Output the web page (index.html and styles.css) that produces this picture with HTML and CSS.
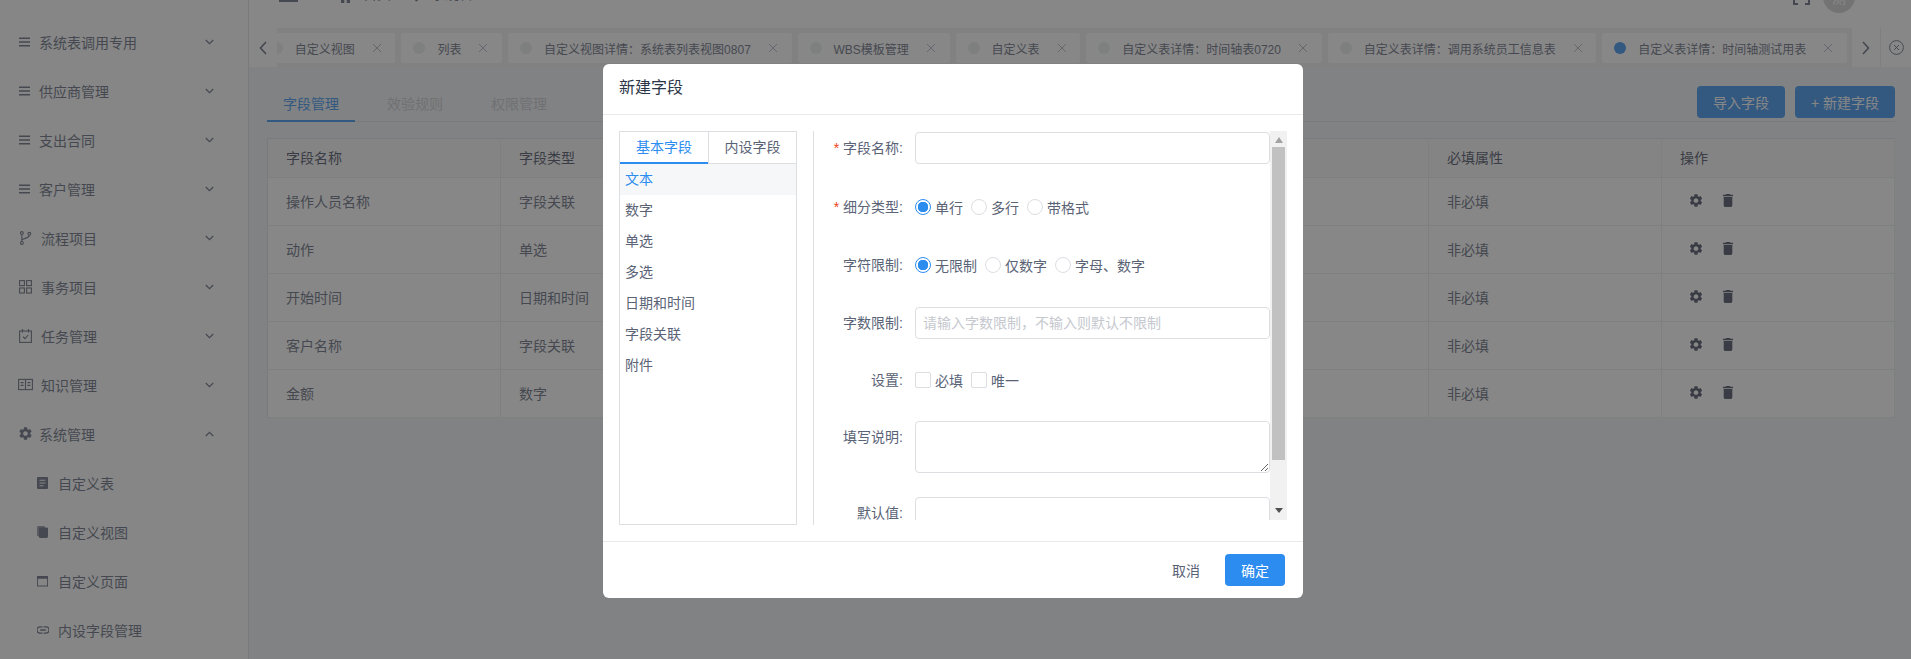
FILE: index.html
```html
<!DOCTYPE html>
<html lang="zh-CN">
<head>
    <meta charset="UTF-8">
    <title>新建字段</title>
    <link rel="stylesheet" href="styles.css">
</head>
<body>
    <svg class="defs" xmlns="http://www.w3.org/2000/svg">
        <symbol id="i-menu" viewBox="0 0 11 10"><path d="M0 1.2h11M0 5h11M0 8.8h11" fill="none" stroke="currentColor" stroke-width="1.4"/></symbol>
        <symbol id="i-branch" viewBox="0 0 13 15"><g fill="none" stroke="currentColor" stroke-width="1.2"><circle cx="2.6" cy="2.2" r="1.5"/><circle cx="2.6" cy="12.8" r="1.5"/><circle cx="10.6" cy="3" r="1.5"/><path d="M2.6 3.7v7.6M10.6 4.5c0 3.2-5 2.6-8 5"/></g></symbol>
        <symbol id="i-grid" viewBox="0 0 13 14"><g fill="none" stroke="currentColor" stroke-width="1.1"><rect x=".6" y=".6" width="4.8" height="5"/><rect x="7.6" y=".6" width="4.8" height="5"/><rect x=".6" y="8" width="4.8" height="5"/><rect x="7.6" y="8" width="4.8" height="5"/></g></symbol>
        <symbol id="i-task" viewBox="0 0 13 14"><g fill="none" stroke="currentColor" stroke-width="1.1"><rect x=".6" y="2" width="11.8" height="11.4"/><path d="M3.5 0v3.4M9.500 0v3.4M4 7.600l2 2 3.200-3.600"/></g></symbol>
        <symbol id="i-book" viewBox="0 0 15 13"><g fill="none" stroke="currentColor" stroke-width="1.1"><rect x=".6" y="1.400" width="13.800" height="10.200"/><path d="M7.500 1.400v10.200M2.600 4.600h3M2.600 7.400h3M9.400 4.600h3M9.400 7.400h3"/></g></symbol>
        <symbol id="i-gear" viewBox="2 2 20 20"><path fill="currentColor" d="M19.140 12.940c.04-.3.06-.61.06-.94 0-.32-.02-.64-.07-.94l2.030-1.580c.18-.14.23-.41.12-.61l-1.920-3.320c-.12-.22-.37-.29-.59-.22l-2.390.96c-.5-.38-1.030-.7-1.620-.94l-.36-2.540c-.04-.24-.24-.41-.48-.41h-3.840c-.24 0-.43.17-.47.41l-.36 2.540c-.59.24-1.130.57-1.620.94l-2.390-.96c-.22-.08-.47 0-.59.22L2.740 8.870c-.12.21-.08.47.12.61l2.030 1.580c-.05.3-.09.63-.09.94s.02.64.07.94l-2.030 1.580c-.18.14-.23.41-.12.61l1.920 3.320c.12.22.37.29.59.22l2.390-.96c.5.38 1.030.7 1.620.94l.36 2.540c.05.24.24.41.48.41h3.840c.24 0 .44-.17.47-.41l.36-2.540c.59-.24 1.130-.56 1.620-.94l2.390.96c.22.08.47 0 .59-.22l1.920-3.320c.12-.22.07-.47-.12-.61l-2.010-1.580zM12 15.600c-1.980 0-3.600-1.620-3.600-3.600s1.620-3.600 3.600-3.600 3.600 1.620 3.600 3.600-1.620 3.600-3.600 3.600z"/></symbol>
        <symbol id="i-trash" viewBox="5 3 14 18"><path fill="currentColor" d="M6 19c0 1.100.9 2 2 2h8c1.100 0 2-.9 2-2V7H6v12zM19 4h-3.500l-1-1h-5l-1 1H5v2h14V4z"/></symbol>
        <symbol id="i-doc" viewBox="0 0 11 12"><path fill="currentColor" fill-rule="evenodd" d="M1 0h9a1 1 0 0 1 1 1v10a1 1 0 0 1-1 1H1a1 1 0 0 1-1-1V1a1 1 0 0 1 1-1zm1.500 2.800v1h6v-1zm0 2.700v1h6v-1zm0 2.700v1h4v-1z"/></symbol>
        <symbol id="i-copy" viewBox="0 0 12 13"><path fill="currentColor" opacity=".7" d="M1.500 0h7v2h-6a.5.5 0 0 0-.5.5V11H1a1 1 0 0 1-1-1V1.500A1.500 1.500 0 0 1 1.500 0z"/><rect x="2" y="1.500" width="10" height="11.500" rx="1.500" fill="currentColor"/></symbol>
        <symbol id="i-window" viewBox="0 0 12 12"><path fill="currentColor" fill-rule="evenodd" d="M0 .5h12v11.500H0zm1 3v7.500h10V3.500z"/></symbol>
        <symbol id="i-link" viewBox="0 0 12 8"><g fill="none" stroke="currentColor" stroke-width="1.300"><path d="M5.500 .9H3a3.100 3.100 0 0 0 0 6.200h2.500M6.500 .9H9a3.100 3.100 0 0 1 0 6.200H6.500M3.200 4h5.600"/></g></symbol>
        <symbol id="i-down" viewBox="0 0 9 6"><path d="M.8 1l3.700 3.700L8.200 1" fill="none" stroke="currentColor" stroke-width="1.200"/></symbol>
        <symbol id="i-up" viewBox="0 0 9 6"><path d="M.8 5l3.700-3.700L8.200 5" fill="none" stroke="currentColor" stroke-width="1.200"/></symbol>
        <symbol id="i-x" viewBox="0 0 10 10"><path d="M1 1l8 8M9 1l-8 8" fill="none" stroke="currentColor" stroke-width=".9"/></symbol>
    </svg>

    <div class="layout">
        <aside class="sidebar">
            <div class="menu-item"><svg class="menu-icon menu-icon-bars"><use href="#i-menu"/></svg><span class="menu-text">系统表调用专用</span><svg class="chev"><use href="#i-down"/></svg></div>
            <div class="menu-item"><svg class="menu-icon menu-icon-bars"><use href="#i-menu"/></svg><span class="menu-text">供应商管理</span><svg class="chev"><use href="#i-down"/></svg></div>
            <div class="menu-item"><svg class="menu-icon menu-icon-bars"><use href="#i-menu"/></svg><span class="menu-text">支出合同</span><svg class="chev"><use href="#i-down"/></svg></div>
            <div class="menu-item"><svg class="menu-icon menu-icon-bars"><use href="#i-menu"/></svg><span class="menu-text">客户管理</span><svg class="chev"><use href="#i-down"/></svg></div>
            <div class="menu-item"><svg class="menu-icon"><use href="#i-branch"/></svg><span class="menu-text">流程项目</span><svg class="chev"><use href="#i-down"/></svg></div>
            <div class="menu-item"><svg class="menu-icon"><use href="#i-grid"/></svg><span class="menu-text">事务项目</span><svg class="chev"><use href="#i-down"/></svg></div>
            <div class="menu-item"><svg class="menu-icon"><use href="#i-task"/></svg><span class="menu-text">任务管理</span><svg class="chev"><use href="#i-down"/></svg></div>
            <div class="menu-item"><svg class="menu-icon menu-icon-book"><use href="#i-book"/></svg><span class="menu-text">知识管理</span><svg class="chev"><use href="#i-down"/></svg></div>
            <div class="menu-item"><svg class="menu-icon menu-icon-gear"><use href="#i-gear"/></svg><span class="menu-text">系统管理</span><svg class="chev"><use href="#i-up"/></svg></div>
            <div class="menu-item sub-item"><svg class="sub-icon"><use href="#i-doc"/></svg><span class="menu-text">自定义表</span></div>
            <div class="menu-item sub-item"><svg class="sub-icon"><use href="#i-copy"/></svg><span class="menu-text">自定义视图</span></div>
            <div class="menu-item sub-item"><svg class="sub-icon"><use href="#i-window"/></svg><span class="menu-text">自定义页面</span></div>
            <div class="menu-item sub-item"><svg class="sub-icon sub-icon-link"><use href="#i-link"/></svg><span class="menu-text">内设字段管理</span></div>
        </aside>

        <main class="main">
            <header class="topbar">
                <div class="topbar-inner">
                    <svg class="top-bars" viewBox="0 0 19 10"><path d="M0 1h19M0 5h19M0 9h19" stroke="currentColor" stroke-width="2"/></svg>
                    <svg class="crumb-home" viewBox="0 0 9 12"><path d="M4.500 0L9 4v8H5.700V8H3.300v4H0V4z" fill="currentColor"/></svg>
                    <span class="crumb">首页</span>
                    <span class="crumb crumb-sep">/</span>
                    <svg class="crumb-gear"><use href="#i-gear"/></svg>
                    <span class="crumb">系统管理</span>
                    <svg class="top-full" viewBox="0 0 17 16"><path d="M1 5V1h4M12 1h4v4M16 11v4h-4M5 15H1v-4" fill="none" stroke="currentColor" stroke-width="2"/></svg>
                    <span class="avatar">测</span>
                </div>
            </header>

            <nav class="tagbar">
                <button class="tag-btn"><svg viewBox="0 0 8 14"><path d="M7 1L1.500 7 7 13" fill="none" stroke="currentColor" stroke-width="1.500"/></svg></button>
                <div class="tag-scroll">
                    <div class="tag tag-first"><i class="dot"></i><span>自定义视图</span><svg class="tag-x"><use href="#i-x"/></svg></div>
                    <div class="tag"><i class="dot"></i><span>列表</span><svg class="tag-x"><use href="#i-x"/></svg></div>
                    <div class="tag"><i class="dot"></i><span>自定义视图详情：系统表列表视图0807</span><svg class="tag-x"><use href="#i-x"/></svg></div>
                    <div class="tag"><i class="dot"></i><span>WBS模板管理</span><svg class="tag-x"><use href="#i-x"/></svg></div>
                    <div class="tag"><i class="dot"></i><span>自定义表</span><svg class="tag-x"><use href="#i-x"/></svg></div>
                    <div class="tag"><i class="dot"></i><span>自定义表详情：时间轴表0720</span><svg class="tag-x"><use href="#i-x"/></svg></div>
                    <div class="tag"><i class="dot"></i><span>自定义表详情：调用系统员工信息表</span><svg class="tag-x"><use href="#i-x"/></svg></div>
                    <div class="tag"><i class="dot dot-on"></i><span>自定义表详情：时间轴测试用表</span><svg class="tag-x"><use href="#i-x"/></svg></div>
                </div>
                <button class="tag-btn"><svg viewBox="0 0 8 14"><path d="M1 1l5.500 6L1 13" fill="none" stroke="currentColor" stroke-width="1.500"/></svg></button>
                <button class="tag-close"><svg viewBox="0 0 15 15"><g fill="none" stroke="currentColor" stroke-width=".9"><circle cx="7.500" cy="7.500" r="6.900"/><path d="M5 5l5 5M10 5l-5 5"/></g></svg></button>
            </nav>

            <section class="content">
                <div class="content-head">
                    <div class="tabs">
                        <div class="tab tab-on">字段管理</div>
                        <div class="tab">效验规则</div>
                        <div class="tab">权限管理</div>
                    </div>
                    <div class="head-actions">
                        <button class="btn-primary btn-import">导入字段</button>
                        <button class="btn-primary btn-new">+ 新建字段</button>
                    </div>
                </div>

                <table class="grid">
                    <thead>
                        <tr><th>字段名称</th><th>字段类型</th><th></th><th></th><th></th><th>必填属性</th><th>操作</th></tr>
                    </thead>
                    <tbody>
                        <tr><td>操作人员名称</td><td>字段关联</td><td></td><td></td><td></td><td>非必填</td><td><div class="ops"><svg class="op-gear"><use href="#i-gear"/></svg><svg class="op-trash"><use href="#i-trash"/></svg></div></td></tr>
                        <tr><td>动作</td><td>单选</td><td></td><td></td><td></td><td>非必填</td><td><div class="ops"><svg class="op-gear"><use href="#i-gear"/></svg><svg class="op-trash"><use href="#i-trash"/></svg></div></td></tr>
                        <tr><td>开始时间</td><td>日期和时间</td><td></td><td></td><td></td><td>非必填</td><td><div class="ops"><svg class="op-gear"><use href="#i-gear"/></svg><svg class="op-trash"><use href="#i-trash"/></svg></div></td></tr>
                        <tr><td>客户名称</td><td>字段关联</td><td></td><td></td><td></td><td>非必填</td><td><div class="ops"><svg class="op-gear"><use href="#i-gear"/></svg><svg class="op-trash"><use href="#i-trash"/></svg></div></td></tr>
                        <tr><td>金额</td><td>数字</td><td></td><td></td><td></td><td>非必填</td><td><div class="ops"><svg class="op-gear"><use href="#i-gear"/></svg><svg class="op-trash"><use href="#i-trash"/></svg></div></td></tr>
                    </tbody>
                </table>
            </section>
        </main>
    </div>

    <div class="mask"></div>

    <div class="modal">
        <div class="modal-head">新建字段</div>
        <div class="modal-body">
            <div class="types">
                <div class="types-tabs">
                    <div class="types-tab types-tab-on">基本字段</div>
                    <div class="types-tab">内设字段</div>
                </div>
                <ul class="types-list">
                    <li class="types-on">文本</li>
                    <li>数字</li>
                    <li>单选</li>
                    <li>多选</li>
                    <li>日期和时间</li>
                    <li>字段关联</li>
                    <li>附件</li>
                </ul>
            </div>
            <div class="form-wrap">
                <form class="form">
                    <div class="field field-name">
                        <label class="field-label"><em>*</em>字段名称:</label>
                        <input class="text-input" type="text">
                    </div>
                    <div class="field">
                        <label class="field-label"><em>*</em>细分类型:</label>
                        <div class="choices">
                            <span class="radio radio-on"></span><span class="choice">单行</span>
                            <span class="radio"></span><span class="choice">多行</span>
                            <span class="radio"></span><span class="choice">带格式</span>
                        </div>
                    </div>
                    <div class="field">
                        <label class="field-label">字符限制:</label>
                        <div class="choices">
                            <span class="radio radio-on"></span><span class="choice">无限制</span>
                            <span class="radio"></span><span class="choice">仅数字</span>
                            <span class="radio"></span><span class="choice">字母、数字</span>
                        </div>
                    </div>
                    <div class="field field-limit">
                        <label class="field-label">字数限制:</label>
                        <input class="text-input" type="text" placeholder="请输入字数限制，不输入则默认不限制">
                    </div>
                    <div class="field field-settings">
                        <label class="field-label">设置:</label>
                        <div class="choices">
                            <span class="check"></span><span class="choice">必填</span>
                            <span class="check"></span><span class="choice">唯一</span>
                        </div>
                    </div>
                    <div class="field field-note">
                        <label class="field-label">填写说明:</label>
                        <textarea class="text-area"></textarea>
                    </div>
                    <div class="field">
                        <label class="field-label">默认值:</label>
                        <input class="text-input" type="text">
                    </div>
                </form>
                <div class="scrollbar">
                    <i class="arrow-up"></i>
                    <div class="thumb"></div>
                    <i class="arrow-down"></i>
                </div>
            </div>
        </div>
        <div class="modal-foot">
            <button class="btn-text">取消</button>
            <button class="btn-ok">确定</button>
        </div>
    </div>
</body>
</html>
```

FILE: styles.css
```css
* {
    box-sizing: border-box;
}
html, body {
    height: 100%;
}
body {
    margin: 0;
    overflow: hidden;
    font-family: "Liberation Sans", "Noto Sans CJK SC", sans-serif;
    font-size: 14px;
    color: #5a6376;
    background: #f0f2f5;
}
button {
    font-family: inherit;
    border: none;
    padding: 0;
}
.defs {
    display: none;
}
.layout {
    display: flex;
    height: 100%;
}

/* sidebar */
.sidebar {
    width: 249px;
    flex-shrink: 0;
    padding-top: 17px;
    background: #fcfcfc;
    border-right: 1px solid #dcdee2;
}
.menu-item {
    display: flex;
    align-items: center;
    height: 49px;
    padding: 0 34px 0 19px;
}
.menu-icon {
    width: 13px;
    height: 14px;
    margin-right: 9px;
    flex-shrink: 0;
}
.menu-icon-bars {
    width: 11px;
    height: 10px;
    margin-right: 9px;
}
.menu-icon-book {
    width: 15px;
    height: 13px;
    margin-left: -1px;
    margin-right: 8px;
}
.menu-icon-gear {
    width: 13px;
    height: 13px;
    margin-right: 7px;
}
.menu-text {
    flex: 1;
}
.chev {
    width: 9px;
    height: 6px;
}
.sub-item {
    padding-left: 37px;
}
.sub-icon {
    width: 11px;
    height: 12px;
    margin-right: 10px;
    flex-shrink: 0;
}
.sub-icon-link {
    width: 12px;
    height: 8px;
    margin-right: 9px;
}

.main {
    flex: 1;
    min-width: 0;
}
.topbar {
    height: 28px;
    overflow: hidden;
    background: #fff;
}
.topbar-inner {
    display: flex;
    align-items: center;
    height: 32px;
    margin-top: -19px;
    padding-right: 56px;
}
.top-bars {
    width: 19px;
    height: 10px;
    margin-left: 30px;
}
.crumb {
    margin-bottom: 8px;
}
.crumb-home {
    width: 9px;
    height: 12px;
    margin: 0 13px 0 43px;
}
.crumb-sep {
    margin-left: 8px;
    margin-right: 8px;
    color: #c5c8ce;
}
.crumb-gear {
    width: 9px;
    height: 12px;
    margin: 0 10px 0 1px;
}
.top-full {
    width: 17px;
    height: 16px;
    margin-left: auto;
    margin-right: 13px;
}
.avatar {
    display: flex;
    align-items: center;
    justify-content: center;
    width: 32px;
    height: 32px;
    border-radius: 50%;
    background: #ccc;
    color: #fff;
}

/* tag bar */
.tagbar {
    display: flex;
    height: 39px;
    background: #f0f0f0;
}
.tag-btn, .tag-close {
    display: flex;
    align-items: center;
    justify-content: center;
    flex-shrink: 0;
    width: 28px;
    background: #fff;
    color: #515a6e;
}
.tag-btn svg {
    width: 8px;
    height: 14px;
}
.tag-close {
    width: 31px;
    border-left: 1px solid #e8eaec;
}
.tag-close svg {
    width: 15px;
    height: 15px;
}
.tag-scroll {
    display: flex;
    flex: 1;
    min-width: 0;
    gap: 6px;
    padding-top: 5px;
    overflow: hidden;
}
.tag {
    display: flex;
    align-items: center;
    flex-shrink: 0;
    height: 30px;
    padding: 0 13.7px 0 12px;
    font-size: 12px;
    background: #fff;
    border-radius: 3px;
}
.tag-first {
    margin-left: -18.3px;
}
.dot {
    width: 12px;
    height: 12px;
    margin-right: 12px;
    border-radius: 50%;
    background: #e8eaec;
}
.dot-on {
    background: #2d8cf0;
}
.tag-x {
    width: 10px;
    height: 10px;
    margin-left: 17px;
    color: #a0a6b4;
}

/* page content */
.content {
    padding: 19px 16px 0 18px;
}
.content-head {
    display: flex;
    justify-content: space-between;
    height: 36px;
    margin-bottom: 16px;
    border-bottom: 1px solid #dcdee2;
}
.tabs {
    display: flex;
    gap: 16px;
}
.tab {
    height: 36px;
    padding: 10px 16px 0;
    line-height: 16px;
    color: #c5c8ce;
}
.tab-on {
    color: #2d8cf0;
    border-bottom: 2px solid #2d8cf0;
}
.head-actions {
    display: flex;
    gap: 10px;
}
.btn-primary {
    height: 32px;
    font-size: 14px;
    color: #fff;
    background: #2d8cf0;
    border-radius: 4px;
}
.btn-import {
    width: 88px;
}
.btn-new {
    width: 100px;
}
.grid {
    width: 100%;
    table-layout: fixed;
    border-collapse: collapse;
    background: #fff;
    border: 1px solid #dcdee2;
}
.grid th, .grid td {
    padding: 0 18px 2px;
    text-align: left;
    font-weight: 400;
    border-bottom: 1px solid #e8eaec;
    border-right: 1px solid #e8eaec;
}
.grid th {
    height: 39px;
    color: #3d4557;
    background: #f8f8f9;
}
.grid th:nth-child(-n+2), .grid th:nth-child(n+6) {
    width: 233px;
}
.grid td {
    height: 48px;
}
.ops {
    display: flex;
    align-items: center;
    padding-left: 9px;
    color: #3d4557;
}
.op-gear {
    width: 14px;
    height: 13px;
    margin-right: 20px;
}
.op-trash {
    width: 10px;
    height: 13px;
}

/* dialog */
.mask {
    position: fixed;
    top: 0;
    left: 0;
    right: 0;
    bottom: 0;
    background: rgba(55, 55, 55, 0.6);
}
.modal {
    position: fixed;
    top: 64px;
    left: 603px;
    width: 700px;
    height: 534px;
    background: #fff;
    border-radius: 6px;
}
.modal-head {
    height: 51px;
    padding: 0 16px;
    line-height: 48px;
    font-size: 16px;
    color: #2c3548;
    border-bottom: 1px solid #e8eaec;
}
.modal-body {
    display: flex;
    height: 426px;
    padding: 16px;
}
.types {
    width: 178px;
    height: 394px;
    flex-shrink: 0;
    margin-right: 16px;
    border: 1px solid #dcdee2;
}
.types-tabs {
    display: flex;
    height: 32px;
    border-bottom: 1px solid #dcdee2;
}
.types-tab {
    width: 50%;
    line-height: 30px;
    text-align: center;
    height: 32px;
}
.types-tab + .types-tab {
    border-left: 1px solid #dcdee2;
}
.types-tab-on {
    color: #2d8cf0;
    border-bottom: 2px solid #2d8cf0;
}
.types-list {
    margin: 0;
    padding: 0;
    list-style: none;
}
.types-list li {
    height: 31px;
    padding-left: 5px;
    line-height: 31px;
}
.types-list .types-on {
    color: #2d8cf0;
    background: #f5f7f9;
}
.form-wrap {
    display: flex;
    flex: 1;
    min-width: 0;
    height: 394px;
    border-left: 1px solid #dcdee2;
}
.form {
    flex: 1;
    min-width: 0;
    height: 389px;
    padding-top: 1px;
    overflow: hidden;
}
.field {
    display: flex;
    margin-bottom: 26px;
}
.field-name {
    margin-bottom: 27px;
}
.field-limit, .field-settings {
    margin-bottom: 25px;
}
.field-note {
    margin-bottom: 24px;
}
.field-label {
    width: 89px;
    margin-right: 12px;
    flex-shrink: 0;
    line-height: 32px;
    text-align: right;
}
.field-label em {
    margin-right: 4px;
    font-style: normal;
    color: #ed4014;
}
.text-input, .text-area {
    flex: 1;
    min-width: 0;
    font-family: inherit;
    font-size: 14px;
    color: #515a6e;
    border: 1px solid #dcdee2;
    border-radius: 4px;
    outline: none;
    background: #fff;
}
.text-input {
    height: 32px;
    padding: 0 7px;
}
.text-input::placeholder {
    color: #c5c8ce;
    opacity: 1;
}
.text-area {
    height: 52px;
    padding: 4px 7px;
    resize: vertical;
}
.choices {
    display: flex;
    align-items: center;
    height: 32px;
}
.radio, .check {
    width: 16px;
    height: 16px;
    margin-right: 4px;
    flex-shrink: 0;
    background: #fff;
    border: 1px solid #dcdee2;
}
.radio {
    border-radius: 50%;
}
.check {
    border-radius: 2px;
}
.radio-on {
    border-color: #2d8cf0;
    background: radial-gradient(circle, #2d8cf0 0, #2d8cf0 5px, #fff 5.500px);
}
.choice {
    margin-right: 8px;
}
.scrollbar {
    display: flex;
    flex-direction: column;
    align-items: center;
    width: 17px;
    height: 389px;
    flex-shrink: 0;
    background: #f1f1f1;
}
.thumb {
    width: 13px;
    height: 313px;
    margin-top: 4px;
    background: #c1c1c1;
}
.arrow-up, .arrow-down {
    width: 0;
    height: 0;
    border-left: 4px solid transparent;
    border-right: 4px solid transparent;
}
.arrow-up {
    margin-top: 6px;
    border-bottom: 6px solid #a3a3a3;
}
.arrow-down {
    margin-top: 48px;
    border-top: 5px solid #505050;
}
.modal-foot {
    display: flex;
    justify-content: flex-end;
    align-items: center;
    height: 57px;
    padding: 12px 18px;
    border-top: 1px solid #e8eaec;
}
.btn-text {
    height: 32px;
    padding: 0 16px;
    margin-right: 9px;
    font-size: 14px;
    color: #5a6376;
    background: none;
}
.btn-ok {
    width: 60px;
    height: 32px;
    font-size: 14px;
    color: #fff;
    background: #2d8cf0;
    border-radius: 4px;
}
```
